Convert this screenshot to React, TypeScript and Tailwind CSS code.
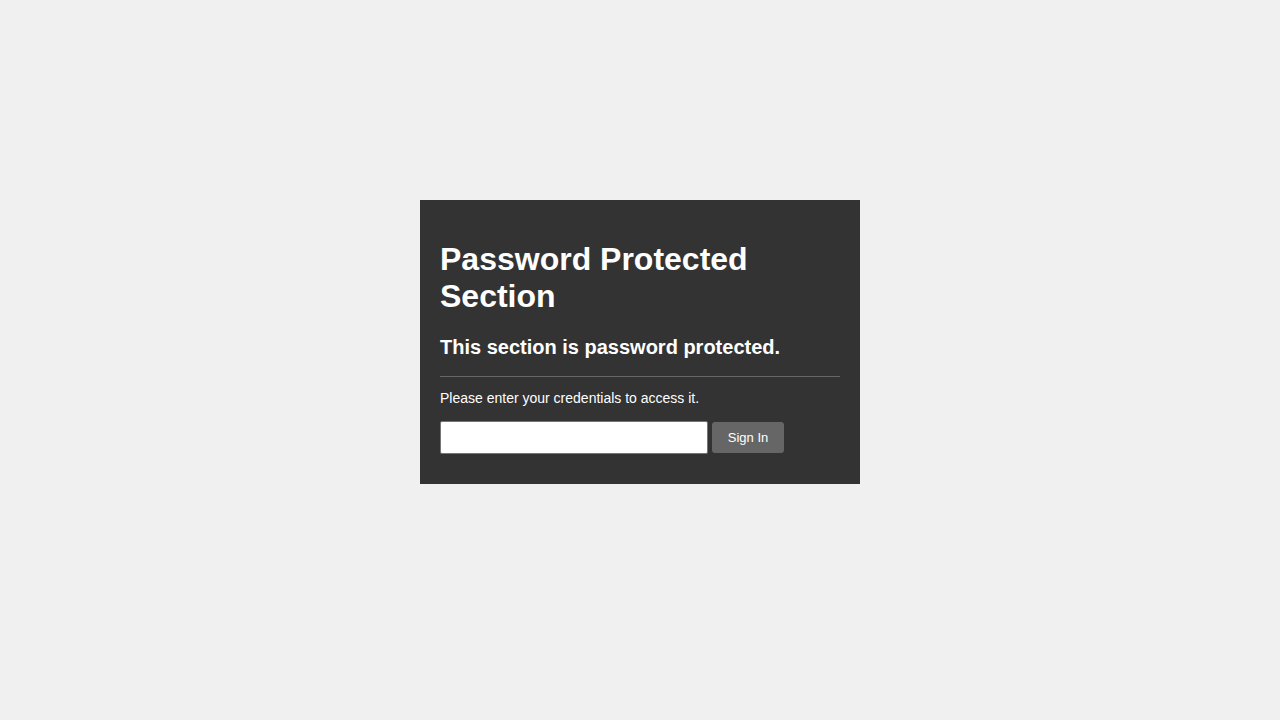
export default function App() {
  return (
    <div className="min-h-screen bg-[#f0f0f0] pt-[200px] font-['Liberation_Sans',Arial,sans-serif]">
      <div className="mx-auto w-[440px] bg-[#333333] px-5 pt-5 pb-[30px] text-white">
        <h1 className="mt-[21px] mb-[21px] text-[32px] font-bold leading-[37px]">
          Password Protected Section
        </h1>
        <h2 className="mb-[17px] text-[20px] font-bold leading-[23px]">
          This section is password protected.
        </h2>
        <hr className="border-t border-[#666666]" />
        <p className="mt-[13px] mb-[15px] text-[14px] leading-[16px]">
          Please enter your credentials to access it.
        </p>
        <form className="flex items-center gap-1" onSubmit={(e) => e.preventDefault()}>
          <input
            type="password"
            className="h-[33px] w-[268px] rounded-[2px] border border-[#767676] bg-white px-2 text-black"
          />
          <button
            type="submit"
            className="h-[31px] w-[72px] rounded-[3px] bg-[#666666] text-[13px] text-white"
          >
            Sign In
          </button>
        </form>
      </div>
    </div>
  );
}
